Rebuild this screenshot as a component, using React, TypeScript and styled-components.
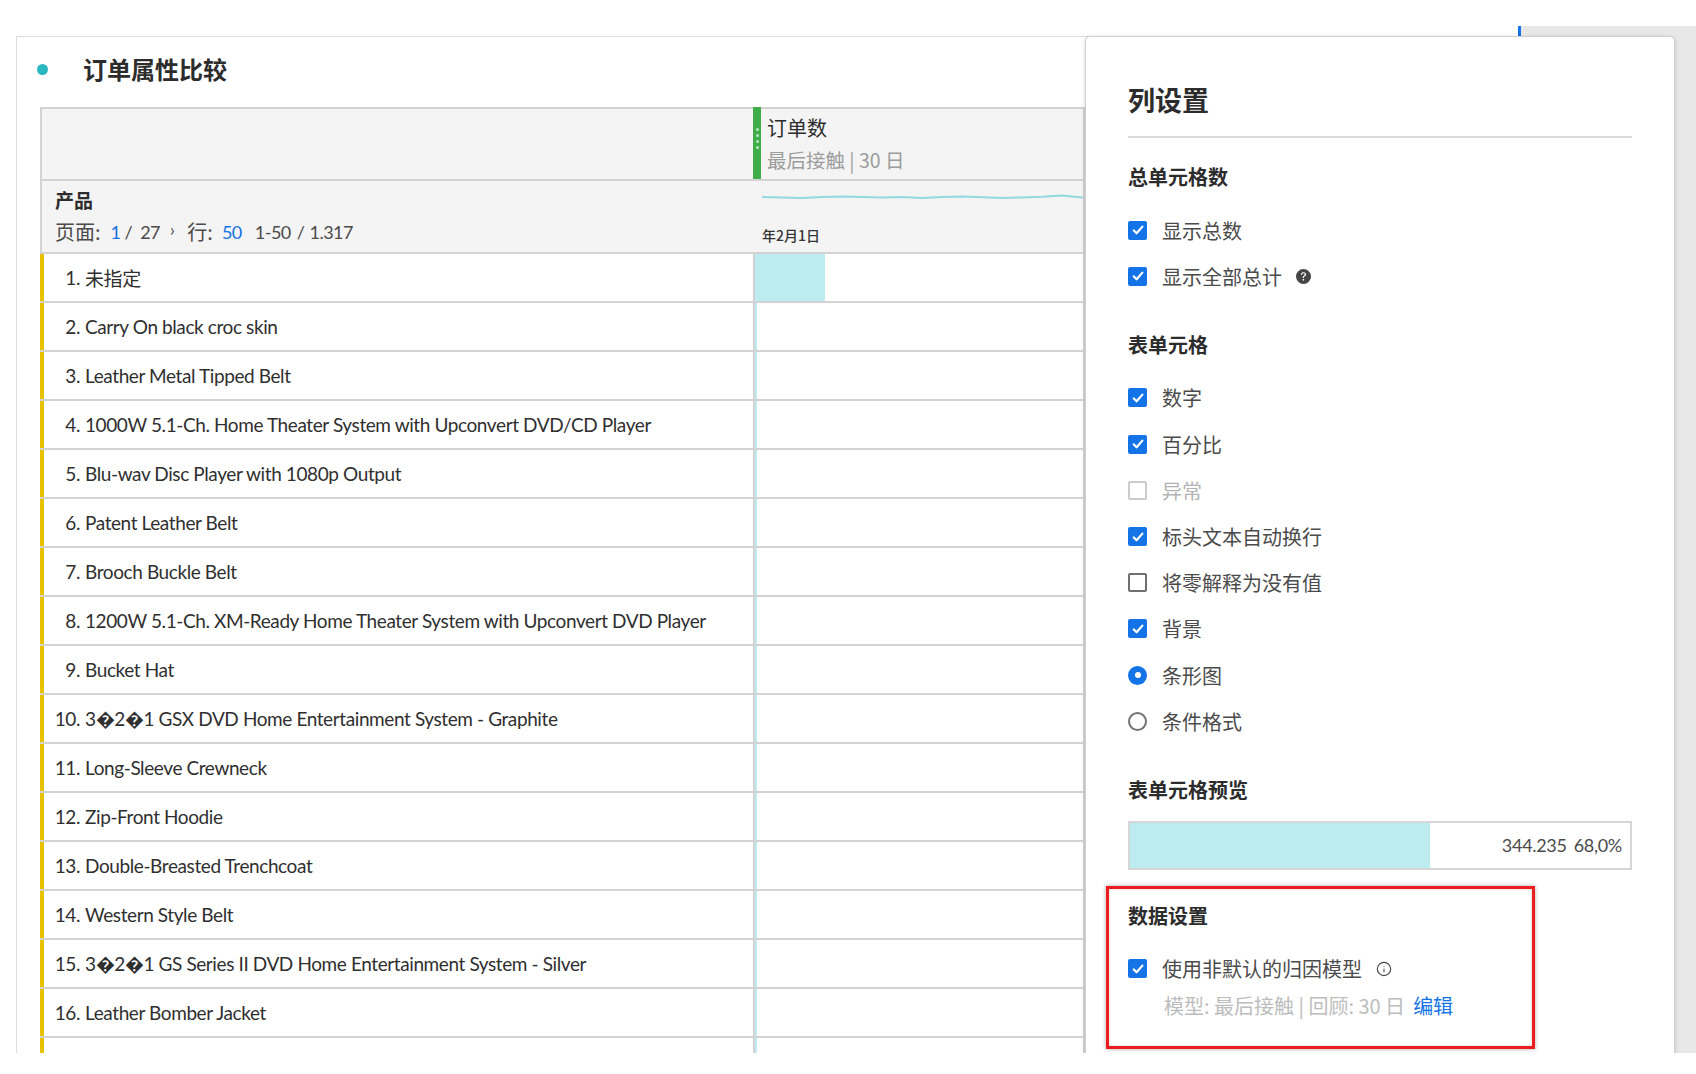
import React from "react";
import styled, { createGlobalStyle } from "styled-components";
import { BsQuestionCircleFill } from "react-icons/bs";
import { Info } from "lucide-react";

const GlobalStyle = createGlobalStyle`
  html, body { margin: 0; padding: 0; background: #ffffff; }
  body { font-family: Lato, "Noto Sans CJK SC", sans-serif; color: #2c2c2c; }
  * { box-sizing: border-box; }
`;

const CJK = `"Noto Sans CJK SC", Lato, sans-serif`;

const Page = styled.div`
  position: relative;
  height: 1053px;
  overflow: hidden;
  display: grid;
  grid-template-columns: 1521px 1fr;
`;

const Workspace = styled.main`
  padding: 36px 0 0 16px;
  min-width: 0;
`;

const ReportPanel = styled.section`
  height: 100%;
  background: #fff;
  border-top: 1px solid #dcdcdc;
  border-left: 1px solid #dcdcdc;
`;

const PanelHeader = styled.header`
  height: 64px;
  display: flex;
  align-items: center;
  gap: 35px;
  padding-left: 20px;
`;

const Dot = styled.span`
  width: 11px;
  height: 11px;
  border-radius: 50%;
  background: #2ab7c1;
`;

const ReportTitle = styled.h2`
  margin: 0;
  font-family: ${CJK};
  font-size: 24px;
  font-weight: 700;
  color: #2c2c2c;
  line-height: 1;
`;

const Table = styled.div`
  margin: 6px 0 0 23px;
  width: 1045px;
  border-top: 2px solid #d3d3d3;
  border-right: 2px solid #d3d3d3;
`;

const Row = styled.div<{ $h: number }>`
  display: grid;
  grid-template-columns: 713px 1fr;
  height: ${(p) => p.$h}px;
  border-bottom: 2px solid #d3d3d3;
`;

const HeadLabel = styled.div`
  background: #f4f4f4;
  border-left: 2px solid #d3d3d3;
  padding: 6px 0 0 13px;
`;

const HeadMetric = styled.div`
  background: #f4f4f4;
  display: flex;
  min-width: 0;
`;

const Grip = styled.div`
  width: 8px;
  background: #3fae49;
  display: flex;
  flex-direction: column;
  align-items: center;
  justify-content: center;
  gap: 3px;
  margin-top: -2px;
  padding-bottom: 10px;
`;

const GripDot = styled.span`
  width: 3px;
  height: 3px;
  border-radius: 50%;
  background: #b9e3bd;
`;

const MetricHeadText = styled.div`
  padding: 6px 0 0 6px;
`;

const MetricTitle = styled.div`
  font-family: ${CJK};
  font-size: 20px;
  line-height: 26px;
  color: #2c2c2c;
`;

const MetricSub = styled.div`
  font-family: ${CJK};
  font-size: 19.5px;
  line-height: 26px;
  margin-top: 6px;
  color: #9c9c9c;
`;

const DimName = styled.div`
  font-family: ${CJK};
  font-size: 19px;
  font-weight: 700;
  line-height: 26px;
  color: #2c2c2c;
`;

const Pager = styled.div`
  margin-top: 6px;
  font-size: 18px;
  letter-spacing: -0.5px;
  line-height: 26px;
  color: #4b4b4b;
  display: flex;
  align-items: center;
  white-space: nowrap;
`;

const PagerPart = styled.span<{ $gap?: number; $blue?: boolean; $cjk?: boolean }>`
  margin-left: ${(p) => p.$gap ?? 0}px;
  color: ${(p) => (p.$blue ? "#1473e6" : "inherit")};
  font-family: ${(p) => (p.$cjk ? CJK : "inherit")};
  font-size: ${(p) => (p.$cjk ? "20px" : "inherit")};
  letter-spacing: ${(p) => (p.$cjk ? "0" : "inherit")};
`;

const Chevron = styled.span`
  margin-left: 10px;
  font-size: 17px;
  position: relative;
  top: -2px;
`;

const SparkCell = styled.div`
  background: #f4f4f4;
  padding: 11px 0 0 9px;
  min-width: 0;
  overflow: hidden;
`;

const Spark = styled.svg`
  display: block;
  width: 360px;
  height: 10px;
`;

const DateLabel = styled.div`
  margin-top: 23px;
  font-family: ${CJK};
  font-size: 14px;
  font-weight: 500;
  line-height: 20px;
  color: #333;
`;

const ItemCell = styled.div`
  border-left: 4px solid #e8c200;
  display: flex;
  align-items: center;
  padding-left: 8px;
  font-size: 19px;
  letter-spacing: -0.4px;
  color: #2f2f2f;
  white-space: nowrap;
  overflow: hidden;
`;

const ItemNo = styled.span`
  width: 28px;
  text-align: right;
  margin-right: 5px;
  flex: none;
`;

const ValueCell = styled.div`
  border-left: 2px solid #d3d3d3;
  display: flex;
`;

const Bar = styled.div`
  height: 100%;
  background: #bcecef;
`;

const Rail = styled.div`
  position: relative;
  margin-top: 26px;
  background: #e8e8e8;
  &::before {
    content: "";
    position: absolute;
    left: -3px;
    top: 0;
    width: 3px;
    height: 10px;
    background: #1473e6;
  }
`;

const Popover = styled.aside`
  position: absolute;
  left: 1085px;
  top: 36px;
  width: 590px;
  height: 1100px;
  background: #fff;
  border: 1px solid #cfcfcf;
  border-radius: 5px;
  box-shadow: 0 1px 4px rgba(0, 0, 0, 0.16);
  padding: 45px 42px 0 42px;
  font-family: ${CJK};
`;

const PopTitle = styled.h1`
  margin: 0;
  height: 36px;
  line-height: 36px;
  font-size: 27px;
  font-weight: 700;
  color: #2c2c2c;
`;

const Divider = styled.hr`
  margin: 18px 0 0 0;
  border: 0;
  height: 2px;
  background: #dcdcdc;
`;

const Section = styled.section<{ $top: number }>`
  margin-top: ${(p) => p.$top}px;
`;

const Heading = styled.h3`
  margin: 0;
  height: 28px;
  line-height: 28px;
  font-size: 20px;
  font-weight: 700;
  color: #2c2c2c;
`;

const OptionList = styled.div`
  margin-top: 16px;
`;

const Option = styled.label<{ $disabled?: boolean }>`
  display: flex;
  align-items: center;
  height: 46.2px;
  gap: 15px;
  font-size: 20px;
  color: ${(p) => (p.$disabled ? "#b4b4b4" : "#4b4b4b")};
`;

const Box = styled.span<{ $state: "on" | "off" | "disabled" }>`
  flex: none;
  width: 19px;
  height: 19px;
  border-radius: 2px;
  display: flex;
  align-items: center;
  justify-content: center;
  background: ${(p) => (p.$state === "on" ? "#1473e6" : "#fff")};
  border: ${(p) =>
    p.$state === "on" ? "none" : p.$state === "off" ? "2px solid #6f6f6f" : "2px solid #cbcbcb"};
`;

const Radio = styled.span<{ $on: boolean }>`
  flex: none;
  width: 19px;
  height: 19px;
  border-radius: 50%;
  display: flex;
  align-items: center;
  justify-content: center;
  background: ${(p) => (p.$on ? "#1473e6" : "#fff")};
  border: ${(p) => (p.$on ? "none" : "2px solid #747474")};
  &::after {
    content: "";
    width: 6px;
    height: 6px;
    border-radius: 50%;
    background: ${(p) => (p.$on ? "#fff" : "transparent")};
  }
`;

const IconSlot = styled.span`
  display: inline-flex;
  align-items: center;
  margin-left: -1px;
  color: #464646;
`;

const Preview = styled.div<{ $pct: number }>`
  margin-top: 17px;
  height: 49px;
  border: 2px solid #d6d6d6;
  background: linear-gradient(
    to right,
    #bcecef 0,
    #bcecef ${(p) => p.$pct}%,
    #ffffff ${(p) => p.$pct}%
  );
  display: flex;
  align-items: center;
  justify-content: flex-end;
  padding-right: 8px;
  font-family: Lato, sans-serif;
  font-size: 18px;
  letter-spacing: -0.3px;
  color: #4b4b4b;
  gap: 7px;
`;

const Highlight = styled.section`
  margin: 16px 0 0 -22px;
  width: 429px;
  border: 3px solid #ee1c1c;
  box-shadow: 0 0 4px rgba(0, 0, 0, 0.35), inset 0 0 3px rgba(0, 0, 0, 0.2);
  padding: 13px 0 26px 19px;
`;

const ModelLine = styled.div`
  height: 28px;
  line-height: 28px;
  padding-left: 36px;
  font-size: 20px;
  color: #bdbdbd;
  white-space: pre;
`;

const EditLink = styled.span`
  color: #1473e6;
  margin-left: 8px;
`;

const Check = () => (
  <svg width="14" height="14" viewBox="0 0 14 14">
    <path d="M2.8 7.4l2.8 2.9L11.4 3.6" fill="none" stroke="#fff" strokeWidth="2.2" strokeLinecap="round" strokeLinejoin="round" />
  </svg>
);

type CB = { label: string; state: "on" | "off" | "disabled"; icon?: React.ReactNode };

const CheckOption = ({ label, state, icon }: CB) => (
  <Option $disabled={state === "disabled"}>
    <Box $state={state}>{state === "on" && <Check />}</Box>
    <span>{label}</span>
    {icon && <IconSlot>{icon}</IconSlot>}
  </Option>
);

const RadioOption = ({ label, on }: { label: string; on: boolean }) => (
  <Option>
    <Radio $on={on} />
    <span>{label}</span>
  </Option>
);

const items: { name: string; bar: number }[] = [
  { name: "未指定", bar: 70 },
  { name: "Carry On black croc skin", bar: 2 },
  { name: "Leather Metal Tipped Belt", bar: 2 },
  { name: "1000W 5.1-Ch. Home Theater System with Upconvert DVD/CD Player", bar: 2 },
  { name: "Blu-wav Disc Player with 1080p Output", bar: 2 },
  { name: "Patent Leather Belt", bar: 2 },
  { name: "Brooch Buckle Belt", bar: 2 },
  { name: "1200W 5.1-Ch. XM-Ready Home Theater System with Upconvert DVD Player", bar: 2 },
  { name: "Bucket Hat", bar: 2 },
  { name: "3\uFFFD2\uFFFD1 GSX DVD Home Entertainment System - Graphite", bar: 2 },
  { name: "Long-Sleeve Crewneck", bar: 2 },
  { name: "Zip-Front Hoodie", bar: 2 },
  { name: "Double-Breasted Trenchcoat", bar: 2 },
  { name: "Western Style Belt", bar: 2 },
  { name: "3\uFFFD2\uFFFD1 GS Series II DVD Home Entertainment System - Silver", bar: 2 },
  { name: "Leather Bomber Jacket", bar: 2 },
  { name: "", bar: 2 },
];

const sparkPath =
  "M0 5 L20 5.5 L40 6 L60 5 L80 4.5 L100 5 L120 5.5 L140 5 L160 6 L180 5 L200 4.6 L220 5.2 L240 6 L260 5.4 L280 4.8 L300 3.6 L320 5.4 L340 5.6 L360 5.4";

export default function App() {
  return (
    <>
      <GlobalStyle />
      <Page>
        <Workspace>
          <ReportPanel>
            <PanelHeader>
              <Dot />
              <ReportTitle>订单属性比较</ReportTitle>
            </PanelHeader>
            <Table>
              <Row $h={72}>
                <HeadLabel />
                <HeadMetric>
                  <Grip>
                    <GripDot />
                    <GripDot />
                    <GripDot />
                    <GripDot />
                  </Grip>
                  <MetricHeadText>
                    <MetricTitle>订单数</MetricTitle>
                    <MetricSub>最后接触 | 30 日</MetricSub>
                  </MetricHeadText>
                </HeadMetric>
              </Row>
              <Row $h={73}>
                <HeadLabel>
                  <DimName>产品</DimName>
                  <Pager>
                    <PagerPart $cjk>页面:</PagerPart>
                    <PagerPart $gap={10} $blue>1</PagerPart>
                    <PagerPart $gap={4}>/</PagerPart>
                    <PagerPart $gap={8}>27</PagerPart>
                    <Chevron>›</Chevron>
                    <PagerPart $gap={13} $cjk>行:</PagerPart>
                    <PagerPart $gap={9} $blue>50</PagerPart>
                    <PagerPart $gap={13}>1-50</PagerPart>
                    <PagerPart $gap={6}>/</PagerPart>
                    <PagerPart $gap={5}>1.317</PagerPart>
                  </Pager>
                </HeadLabel>
                <SparkCell>
                  <Spark viewBox="0 0 360 10" preserveAspectRatio="none">
                    <path d={sparkPath} fill="none" stroke="#94d9e0" strokeWidth="2" />
                  </Spark>
                  <DateLabel>年2月1日</DateLabel>
                </SparkCell>
              </Row>
              {items.map((it, i) => (
                <Row $h={49} key={i}>
                  <ItemCell>
                    {it.name && <ItemNo>{i + 1}.</ItemNo>}
                    <span>{it.name}</span>
                  </ItemCell>
                  <ValueCell>
                    <Bar style={{ width: it.bar }} />
                  </ValueCell>
                </Row>
              ))}
            </Table>
          </ReportPanel>
        </Workspace>
        <Rail />
        <Popover>
          <PopTitle>列设置</PopTitle>
          <Divider />
          <Section $top={25}>
            <Heading>总单元格数</Heading>
            <OptionList>
              <CheckOption label="显示总数" state="on" />
              <CheckOption
                label="显示全部总计"
                state="on"
                icon={<BsQuestionCircleFill size={15} />}
              />
            </OptionList>
          </Section>
          <Section $top={31.5}>
            <Heading>表单元格</Heading>
            <OptionList>
              <CheckOption label="数字" state="on" />
              <CheckOption label="百分比" state="on" />
              <CheckOption label="异常" state="disabled" />
              <CheckOption label="标头文本自动换行" state="on" />
              <CheckOption label="将零解释为没有值" state="off" />
              <CheckOption label="背景" state="on" />
              <RadioOption label="条形图" on />
              <RadioOption label="条件格式" on={false} />
            </OptionList>
          </Section>
          <Section $top={31.5}>
            <Heading>表单元格预览</Heading>
            <Preview $pct={60}>
              <span>344.235</span>
              <span>68,0%</span>
            </Preview>
          </Section>
          <Highlight>
            <Heading>数据设置</Heading>
            <OptionList>
              <CheckOption
                label="使用非默认的归因模型"
                state="on"
                icon={<Info size={16} strokeWidth={1.7} />}
              />
            </OptionList>
            <ModelLine>
              模型: 最后接触 | 回顾: 30 日<EditLink>编辑</EditLink>
            </ModelLine>
          </Highlight>
        </Popover>
      </Page>
    </>
  );
}
